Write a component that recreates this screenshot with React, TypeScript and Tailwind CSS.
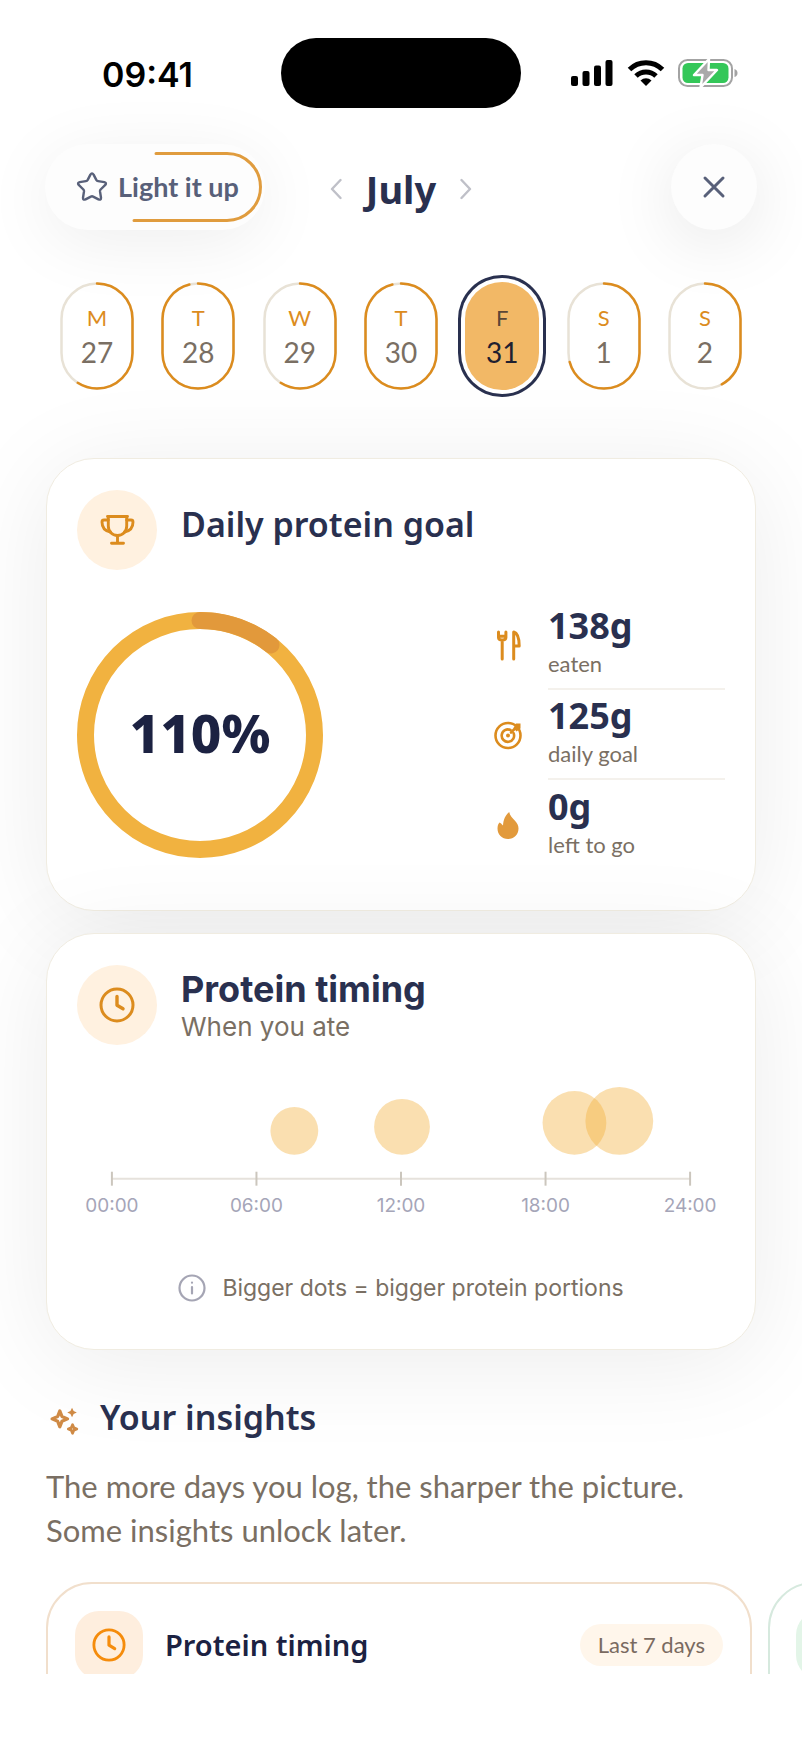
import React, { useState } from 'react';

const days = [
    { letter: 'M', date: 27, progress: 57 },
    { letter: 'T', date: 28, progress: 97 },
    { letter: 'W', date: 29, progress: 57 },
    { letter: 'T', date: 30, progress: 97 },
    { letter: 'F', date: 31, progress: 100 },
    { letter: 'S', date: 1, progress: 66 },
    { letter: 'S', date: 2, progress: 44 },
];

const stats = [
    { value: '138g', label: 'eaten', icon: <CutleryIcon /> },
    { value: '125g', label: 'daily goal', icon: <TargetIcon /> },
    { value: '0g', label: 'left to go', icon: <FlameIcon /> },
];

// x is the meal's place on the 24h axis, axis runs 35..615
const meals = [
    { x: 218, r: 24 },
    { x: 326, r: 28 },
    { x: 499, r: 32 },
    { x: 544, r: 34 },
];

const hours = ['00:00', '06:00', '12:00', '18:00', '24:00'];

function ClockIcon({ className }: { className: string }) {
    return (
        <svg viewBox="0 0 36 36" className={className} fill="none" stroke="currentColor" strokeWidth="3" strokeLinecap="round" strokeLinejoin="round">
            <circle cx="18" cy="18" r="16" />
            <path d="M18 9.500v8.700l6 3.600" strokeWidth="3.400" />
        </svg>
    );
}

function TrophyIcon() {
    return (
        <svg viewBox="0 0 36 36" className="w-9 h-9 text-[#dc8c1e]" fill="none" stroke="currentColor" strokeWidth="2.900" strokeLinecap="round" strokeLinejoin="round">
            <path d="M8.500 4.500h20M9.300 4.500v9.500c0 5.500 3.700 9.500 9.200 9.500s9.200-4 9.200-9.500V4.500" />
            <path d="M9.300 8H5q-2 0-2 2c0 5.500 3 9 8.500 10M27.700 8H32q2 0 2 2c0 5.500-3 9-8.500 10" />
            <path d="M18.500 23.500v7M12.500 31.200h12" />
        </svg>
    );
}

function CutleryIcon() {
    return (
        <svg viewBox="0 0 30 34" className="w-[30px] h-[34px]" fill="none" stroke="#dc8c1e" strokeWidth="3" strokeLinecap="round" strokeLinejoin="round">
            <path d="M5.500 4v5.500q0 2.500 3.700 2.500t3.700-2.500V4M5.500 8.300h7.400M9.200 12v19" />
            <path d="M20.700 31V4c3.800 1 5.500 5 5.500 14h-5.500" />
        </svg>
    );
}

function TargetIcon() {
    return (
        <svg viewBox="0 0 30 30" className="w-[30px] h-[30px]" fill="none" stroke="#dc8c1e" strokeWidth="2.600" strokeLinecap="round">
            <circle cx="15" cy="15.500" r="12.500" />
            <path d="M17.500 10a6.200 6.200 0 1 0 3 3" />
            <circle cx="15" cy="15.500" r="2" fill="#dc8c1e" stroke="none" />
            <path d="M18 12.500l4-4" />
            <path d="M20.500 8L23 3.600h4.500v4.800l-4 3z" fill="#dc8c1e" stroke="none" />
        </svg>
    );
}

function FlameIcon() {
    return (
        <svg viewBox="0 0 30 32" className="w-[30px] h-8" fill="#e29a3c">
            <path d="M16.200 3c.6 3.700 3.300 6 5.800 8.700 2 2.100 3.500 4.600 3.500 7.800C25.500 25.500 21 30 15 30S4.500 25.500 4.500 19.500c0-2.600.6-4.400 2-6 1.200.2 2 1.800 3.500 3C10.500 10.500 12.200 6.500 16.200 3z" />
        </svg>
    );
}

function SparklesIcon() {
    return (
        <svg viewBox="0 0 32 32" className="w-[34px] h-[34px]" fill="none" stroke="#cf8a45" strokeWidth="3" strokeLinejoin="round">
            <path d="M13 6.500l2 5.200 5.300 2.300-5.300 2.300-2 5.200-2-5.200L5.700 14l5.300-2.300z" />
            <path d="M25 19.500l1.200 2.800 2.800 1.200-2.800 1.200-1.200 2.800-1.200-2.800-2.800-1.200 2.800-1.200z" strokeWidth="2.600" />
            <path d="M24.500 3.500l1.500 3.100 3 1.400-3 1.400-1.500 3.100-1.500-3.100-3-1.400 3-1.400z" fill="#cf8a45" stroke="none" />
        </svg>
    );
}

function StatusBar() {
    return (
        <div className="grid grid-cols-[1fr_auto_1fr] items-center">
            <span className="pl-[102px] pt-1 font-['Inter',sans-serif] font-semibold text-[34px] leading-10 text-black">09:41</span>
            <div className="w-60 h-[70px] rounded-full bg-black" />
            <div className="pr-16 flex items-center justify-end gap-[13px]">
                <svg viewBox="0 0 44 28" className="w-11 h-7">
                    <rect x="1" y="17" width="7" height="10" rx="2" />
                    <rect x="12.500" y="12" width="7" height="15" rx="2" />
                    <rect x="24" y="6.500" width="7" height="20.500" rx="2" />
                    <rect x="35.500" y="1" width="7" height="26" rx="2" />
                </svg>
                <svg viewBox="0 0 38 28" className="w-[38px] h-7" fill="none" stroke="#000" strokeWidth="5">
                    <path d="M2.500 10.500a23.500 23.500 0 0 1 33 0M9 17a14.500 14.500 0 0 1 20 0" />
                    <path d="M19 27l-5.500-5.500a8 8 0 0 1 11 0z" fill="#000" stroke="none" />
                </svg>
                <svg viewBox="0 0 60 30" className="w-[60px] h-[30px]">
                    <rect x="1" y="2" width="53" height="26" rx="8.500" fill="none" stroke="#a3a3a3" strokeWidth="2" />
                    <rect x="4.500" y="5" width="46" height="20" rx="5.500" fill="#34c759" />
                    <path d="M56.500 11q3 1 3 4t-3 4z" fill="#a3a3a3" />
                    <path d="M31 1L16 17h8.500L22.500 29.500 39 12h-8.500z" fill="#a9a9a9" stroke="#fff" strokeWidth="2.400" strokeLinejoin="round" />
                </svg>
            </div>
        </div>
    );
}

function Header() {
    return (
        <header className="grid grid-cols-[1fr_auto_1fr] items-center px-[45px] mt-9">
            <button className="relative justify-self-start w-[220px] h-[86px] rounded-full bg-[#fdfdfd] shadow-[0_12px_70px_rgba(0,0,0,0.07)] flex items-center pl-[31px] gap-[10px] text-[#586079] text-[27px] leading-8 font-bold cursor-pointer">
                <svg viewBox="0 0 220 86" className="absolute inset-0 w-full h-full" fill="none" stroke="#e09c3e" strokeWidth="3" strokeLinecap="round">
                    <path d="M111 9.500h71a33.500 33.500 0 0 1 0 67H89" />
                </svg>
                <svg viewBox="0 0 32 32" className="w-8 h-8" fill="none" stroke="currentColor" strokeWidth="2.400" strokeLinejoin="round">
                    <path d="M14.400 3.600q1.600-2.400 3.200 0l2.700 5.300q.6 1 1.800 1.200l6.200 1q2.700.7 1 2.800l-4.700 4.600q-.7.800-.6 1.900l1 6.300q.1 2.700-2.500 1.700l-5.400-2.800q-1.100-.6-2.200 0l-5.400 2.800q-2.600 1-2.500-1.700l1-6.300q.1-1.100-.6-1.900L2.700 13.900q-1.700-2.100 1-2.800l6.200-1q1.200-.2 1.800-1.200z" />
                </svg>
                Light it up
            </button>
            <div className="flex items-center gap-6 pt-1">
                <button aria-label="Previous month" className="cursor-pointer">
                    <svg viewBox="0 0 12 22" className="w-3 h-[22px]" fill="none" stroke="#bfc0c8" strokeWidth="2.400" strokeLinecap="round" strokeLinejoin="round">
                        <path d="M10.500 2L2 11l8.500 9" />
                    </svg>
                </button>
                <h1 className="text-[#29304f] font-['Noto_Sans',sans-serif] text-[38px] leading-10 font-bold">July</h1>
                <button aria-label="Next month" className="cursor-pointer">
                    <svg viewBox="0 0 12 22" className="w-3 h-[22px]" fill="none" stroke="#bfc0c8" strokeWidth="2.400" strokeLinecap="round" strokeLinejoin="round">
                        <path d="M1.500 2L10 11l-8.500 9" />
                    </svg>
                </button>
            </div>
            <button aria-label="Close" className="justify-self-end w-[86px] h-[86px] rounded-full bg-[#fdfdfd] shadow-[0_12px_70px_rgba(0,0,0,0.10)] flex items-center justify-center cursor-pointer">
                <svg viewBox="0 0 24 24" className="w-6 h-6" fill="none" stroke="#586079" strokeWidth="3" strokeLinecap="round">
                    <path d="M3 3l18 18M21 3L3 21" />
                </svg>
            </button>
        </header>
    );
}

function WeekStrip() {
    const [selected, setSelected] = useState(31);

    return (
        <div className="flex justify-between px-[60px] mt-[52px]">
            {days.map((day) => {
                const active = day.date === selected;
                return (
                    <button
                        key={day.date}
                        onClick={() => setSelected(day.date)}
                        className={`relative w-[74px] h-[108px] rounded-full flex flex-col items-center justify-center cursor-pointer ${active ? 'bg-[#f2b866] ring-[3px] ring-[#29304f] ring-offset-4 ring-offset-white' : ''}`}
                    >
                        {!active && (
                            <svg viewBox="0 0 74 108" className="absolute inset-0 w-full h-full" fill="none" strokeWidth="2.500" strokeLinecap="round">
                                <rect x="1.500" y="1.500" width="71" height="105" rx="35.500" stroke="#e8e2d6" />
                                <path
                                    d="M37 1.500A35.500 35.500 0 0 1 72.500 37V71A35.500 35.500 0 0 1 1.500 71V37A35.500 35.500 0 0 1 37 1.500"
                                    pathLength={100}
                                    strokeDasharray={`${day.progress} 200`}
                                    stroke="#dc8c1e"
                                />
                            </svg>
                        )}
                        <span className={`text-[22px] leading-8 ${active ? 'text-[#5a4636]' : 'text-[#dc8c1e]'}`}>{day.letter}</span>
                        <span className={`text-[28px] leading-9 ${active ? 'text-[#1f2030]' : 'text-[#7a6f63]'}`}>{day.date}</span>
                    </button>
                );
            })}
        </div>
    );
}

function GoalCard() {
    return (
        <section className="bg-white border border-[#f0ece1] rounded-[48px] shadow-[0_12px_100px_rgba(0,0,0,0.08)] px-[30px] pt-[31px] pb-10">
            <div className="flex items-center gap-6">
                <div className="w-20 h-20 rounded-full bg-[#fff1e0] flex items-center justify-center">
                    <TrophyIcon />
                </div>
                <h2 className="text-[#29304f] font-['Noto_Sans',sans-serif] text-[34px] leading-10 font-semibold pb-3">Daily protein goal</h2>
            </div>
            <div className="flex items-center justify-between mt-[30px]">
                <div className="relative w-[246px] h-[246px] flex items-center justify-center">
                    <svg viewBox="0 0 246 246" className="absolute inset-0 w-full h-full" fill="none" strokeWidth="17">
                        <circle cx="123" cy="123" r="114.500" stroke="#f1b240" />
                        <path d="M123 8.500A114.500 114.500 0 0 1 194 33" stroke="#e2993b" strokeLinecap="round" />
                    </svg>
                    <span className="relative pb-1 text-[#1c2242] font-['Noto_Sans',sans-serif] text-[53px] leading-16 font-extrabold">110%</span>
                </div>
                <dl className="w-[232px]">
                    {stats.map((stat, idx) => (
                        <div key={stat.label} className="flex items-center gap-[25px]">
                            <span className="w-[30px] flex justify-center">{stat.icon}</span>
                            <div className={`flex-1 h-[90px] pb-1 flex flex-col-reverse justify-center ${idx < stats.length - 1 ? 'border-b-2 border-[#f4f1ec]' : ''}`}>
                                <dt className="text-[#7a6f63] text-[22px] leading-8">{stat.label}</dt>
                                <dd className="text-[#29304f] font-['Noto_Sans',sans-serif] text-4xl leading-11 font-bold">{stat.value}</dd>
                            </div>
                        </div>
                    ))}
                </dl>
            </div>
        </section>
    );
}

function TimingCard() {
    return (
        <section className="bg-white border border-[#f0ece1] rounded-[48px] shadow-[0_12px_100px_rgba(0,0,0,0.08)] px-[30px] pt-[31px] pb-[45px] mt-[22px] font-['Inter',sans-serif]">
            <div className="flex items-center gap-6">
                <div className="w-20 h-20 rounded-full bg-[#fff1e0] flex items-center justify-center">
                    <ClockIcon className="w-9 h-9 text-[#dc8c1e]" />
                </div>
                <div className="pt-1">
                    <h2 className="text-[#29304f] text-4xl leading-10 font-bold">Protein timing</h2>
                    <p className="text-[#7a6f63] text-[26px] leading-9">When you ate</p>
                </div>
            </div>
            <svg viewBox="0 0 650 140" className="w-full mt-9" fontSize="19" textAnchor="middle">
                {meals.map((meal) => (
                    <circle key={meal.x} cx={meal.x} cy={74 - meal.r} r={meal.r} fill="#f2b03a" fillOpacity="0.400" />
                ))}
                <path d="M35 98h580" stroke="#e6e2dc" strokeWidth="2" />
                {hours.map((hour, idx) => (
                    <g key={hour}>
                        <path d={`M${35 + idx * 145} 91v14`} stroke="#cbc6bd" strokeWidth="2" />
                        <text x={35 + idx * 145} y="131" fill="#a5a5b8">{hour}</text>
                    </g>
                ))}
            </svg>
            <p className="flex items-center justify-center gap-4 mt-[51px] text-[#7a6f63] text-[23px] leading-8">
                <svg viewBox="0 0 28 28" className="w-7 h-7" fill="none" stroke="#a5a5b4" strokeWidth="2.200" strokeLinecap="round">
                    <circle cx="14" cy="14" r="12.500" />
                    <path d="M14 13v6.500M14 8.500v.2" />
                </svg>
                Bigger dots = bigger protein portions
            </p>
        </section>
    );
}

function Insights() {
    return (
        <section className="mt-[46px]">
            <div className="flex items-center gap-5 px-[46px]">
                <div className="pt-2">
                    <SparklesIcon />
                </div>
                <h2 className="text-[#29304f] font-['Noto_Sans',sans-serif] text-[34px] leading-10 font-semibold">Your insights</h2>
            </div>
            <p className="px-[46px] mt-[26px] text-[#7a6f63] text-[31px] leading-11">
                The more days you log, the sharper the picture. Some insights unlock later.
            </p>
            <div className="flex gap-4 px-[46px] mt-[30px] overflow-hidden">
                <article className="shrink-0 w-[calc(100%-4px)] h-60 border-2 border-[#f1dfcc] rounded-[46px] bg-white px-[27px] pt-[27px]">
                    <div className="flex items-center">
                        <div className="w-[68px] h-[68px] rounded-3xl bg-[#feeede] flex items-center justify-center">
                            <ClockIcon className="w-[34px] h-[34px] text-[#f58c0c]" />
                        </div>
                        <h3 className="ml-[22px] text-[#1c2242] font-['Noto_Sans',sans-serif] text-[29px] leading-9 font-semibold">Protein timing</h3>
                        <span className="ml-auto rounded-full bg-[#fff6eb] px-[18px] h-[42px] flex items-center text-[#7a6a60] text-[22px]">Last 7 days</span>
                    </div>
                </article>
                <article className="shrink-0 w-full h-60 border-2 border-[#d6e9de] rounded-[46px] bg-white px-[26px] pt-[27px]">
                    <div className="w-[68px] h-[68px] rounded-3xl bg-[#e3f5e8]" />
                </article>
            </div>
        </section>
    );
}

export default function App() {
    return (
        <div className="h-screen bg-white pb-[66px] font-['Lato',sans-serif]">
            <div className="h-full overflow-hidden pt-[38px]">
                <StatusBar />
                <Header />
                <WeekStrip />
                <main className="mt-[68px]">
                    <div className="px-[46px]">
                        <GoalCard />
                        <TimingCard />
                    </div>
                    <Insights />
                </main>
            </div>
        </div>
    );
}
